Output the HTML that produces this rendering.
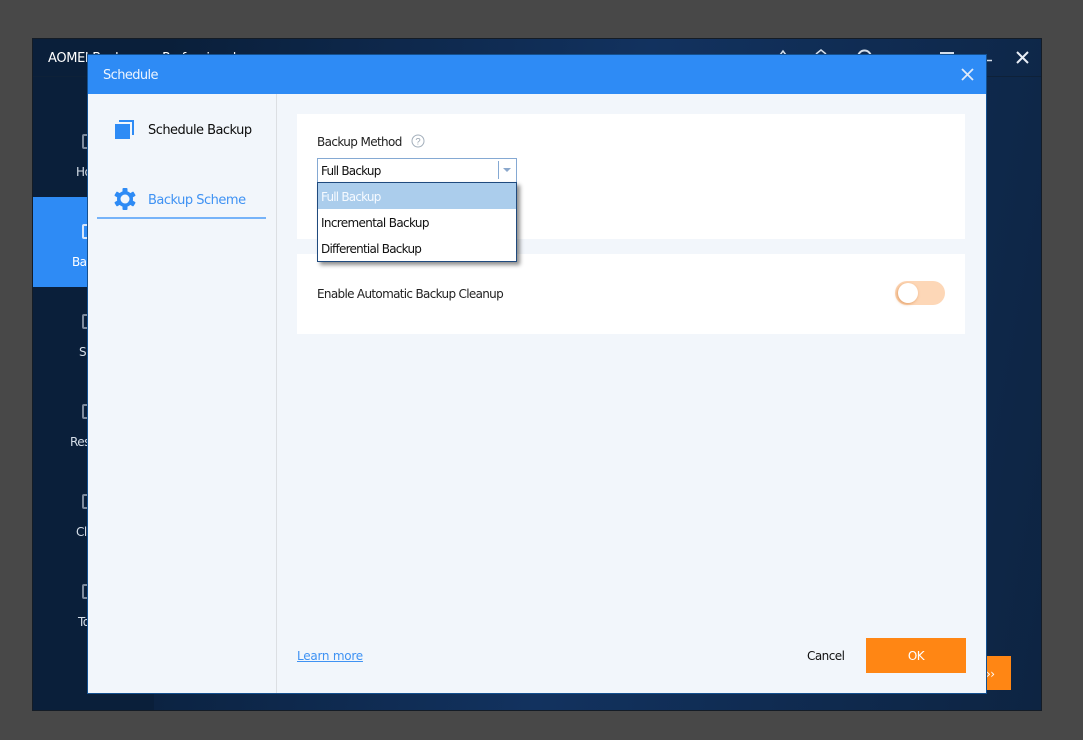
<!DOCTYPE html>
<html><head><meta charset="utf-8"><style>
html,body{margin:0;padding:0}
body{width:1083px;height:740px;background:#484848;position:relative;overflow:hidden;font-family:"DejaVu Sans","Liberation Sans",sans-serif;font-size:12px}
.a{position:absolute}
.t{position:absolute;white-space:nowrap;line-height:16px;letter-spacing:-.55px}
.ni{position:absolute;left:82px;width:12px;height:15px;border:2px solid #7d8b9e;border-radius:2px;box-sizing:border-box}
</style></head><body>
<div class="a" style="left:32px;top:38px;width:1010px;height:673px;box-sizing:border-box;border:1px solid #141c26;background:linear-gradient(100deg,#0a1f3a 0%,#0a1f3a 12%,#12325f 55%,#0d2442 100%);overflow:hidden"></div>
<div class="a" style="left:33px;top:39px;width:121px;height:671px;background:#0a1f3a"></div>
<div class="a" style="left:33px;top:76px;width:1008px;height:1px;background:#0e2138"></div>
<div class="t" style="left:48px;top:51px;color:#fff;font-size:13px;letter-spacing:-.35px">AOMEI Backupper Professional</div>
<svg class="a" style="left:770px;top:44px" width="270" height="24" fill="none" stroke="#d5deea" stroke-width="2">
<path d="M10 11l3-4 3 4" stroke-width="1.5"/><path d="M46 10l5-4 5 4" stroke-width="1.5"/>
<circle cx="94.5" cy="13" r="6.5" stroke-width="2"/><path d="M107 10.500h2M125 10.500h2" stroke-width="1"/>
<path d="M170 9h14" stroke-width="2"/><path d="M205 16.500h17" stroke-width="1.500"/>
<path d="M247 8l11 11M258 8l-11 11" stroke="#e8eef6" stroke-width="2"/></svg>
<div class="a" style="left:33px;top:197px;width:55px;height:90px;background:#2e8bf5"></div>
<div class="ni" style="top:134px"></div><div class="t" style="left:76px;top:164px;color:#d5dee9">Ho</div>
<div class="ni" style="top:224px;border-color:#d6e6fb"></div><div class="t" style="left:72px;top:254px;color:#fff">Ba</div>
<div class="ni" style="top:314px"></div><div class="t" style="left:79px;top:344px;color:#d5dee9">S</div>
<div class="ni" style="top:404px"></div><div class="t" style="left:70px;top:434px;color:#d5dee9">Res</div>
<div class="ni" style="top:494px"></div><div class="t" style="left:76px;top:524px;color:#d5dee9">Cl</div>
<div class="ni" style="top:584px"></div><div class="t" style="left:78px;top:614px;color:#d5dee9">To</div>
<div class="a" style="left:980px;top:656px;width:31px;height:34px;background:#ff8614"></div>
<div class="t" style="left:986px;top:666px;color:#fff">››</div>

<div class="a" style="left:87px;top:54px;width:900px;height:640px;box-sizing:border-box;border:1px solid #14508f;background:#f2f6fb"></div>
<div class="a" style="left:88px;top:55px;width:898px;height:39px;background:#2e8bf5"></div>
<div class="t" style="left:103px;top:68px;color:#eef5fe;font-size:13px;letter-spacing:-.6px">Schedule</div>
<svg class="a" style="left:960px;top:67px" width="15" height="15" fill="none" stroke="#dfeafa" stroke-width="1.8"><path d="M2 2l11 11M13 2L2 13"/></svg>
<div class="a" style="left:276px;top:94px;width:1px;height:599px;background:#dcdfe3"></div>

<svg class="a" style="left:115px;top:120px" width="19" height="19"><rect x="0" y="4" width="15" height="15" fill="#2e8bf5"/><path d="M4 1H18V15" fill="none" stroke="#2e8bf5" stroke-width="2"/></svg>
<div class="t" style="left:148px;top:123px;color:#0d0d0d;font-size:13px;letter-spacing:-.53px">Schedule Backup</div>
<svg class="a" style="left:114px;top:188px" width="22" height="22" viewBox="0 0 22 22"><g fill="#2e8bf5"><circle cx="11" cy="11" r="8"/><rect x="8.500" y="0" width="5" height="22" rx="1"/><rect x="8.500" y="0" width="5" height="22" rx="1" transform="rotate(60 11 11)"/><rect x="8.500" y="0" width="5" height="22" rx="1" transform="rotate(120 11 11)"/></g><circle cx="11" cy="11" r="4.500" fill="#f2f6fb"/></svg>
<div class="t" style="left:148px;top:193px;color:#3f92f3;font-size:13px;letter-spacing:-.5px">Backup Scheme</div>
<div class="a" style="left:97px;top:217px;width:169px;height:2px;background:#76b3f9"></div>

<div class="a" style="left:297px;top:114px;width:668px;height:125px;background:#fff"></div>
<div class="a" style="left:297px;top:254px;width:668px;height:80px;background:#fff"></div>
<div class="t" style="left:317px;top:134px;color:#222;letter-spacing:-.62px">Backup Method</div>
<svg class="a" style="left:411px;top:134px" width="14" height="14" fill="none"><circle cx="7" cy="7" r="6" stroke="#a3afbb" stroke-width="1"/><text x="7" y="10.500" text-anchor="middle" font-size="9.500" font-family="Liberation Sans" fill="#98a4b0">?</text></svg>

<div class="a" style="left:317px;top:158px;width:200px;height:25px;box-sizing:border-box;border:1px solid #85a9d3;background:#fff"></div>
<div class="t" style="left:321px;top:163px;color:#111;letter-spacing:-.8px">Full Backup</div>
<div class="a" style="left:498px;top:161px;width:1px;height:18px;background:#85a9d3"></div>
<div class="a" style="left:503px;top:168px;width:0;height:0;border-left:4.500px solid transparent;border-right:4.500px solid transparent;border-top:4px solid #8ba8cc"></div>

<div class="a" style="left:317px;top:182px;width:200px;height:80px;box-sizing:border-box;border:1px solid #1f4a7e;background:#fff;box-shadow:3px 3px 4px rgba(0,0,0,.45)"></div>
<div class="a" style="left:318px;top:183px;width:198px;height:26px;background:#abcdec"></div>
<div class="t" style="left:321px;top:189px;color:#f6faff;letter-spacing:-.8px">Full Backup</div>
<div class="t" style="left:321px;top:215px;color:#111;letter-spacing:-.66px">Incremental Backup</div>
<div class="t" style="left:321px;top:241px;color:#111;letter-spacing:-.76px">Differential Backup</div>

<div class="t" style="left:317px;top:286px;color:#222;letter-spacing:-.68px">Enable Automatic Backup Cleanup</div>
<div class="a" style="left:895px;top:281px;width:50px;height:24px;border-radius:12px;background:#fdd7b7"></div>
<div class="a" style="left:898px;top:283px;width:20px;height:20px;border-radius:50%;background:#fff;box-shadow:-1px 1px 3px rgba(214,130,60,.7)"></div>

<div class="t" style="left:297px;top:648px;color:#3f92f3;text-decoration:underline;letter-spacing:-.25px">Learn more</div>
<div class="t" style="left:807px;top:648px;color:#111">Cancel</div>
<div class="a" style="left:866px;top:638px;width:100px;height:35px;background:#ff8614"></div>
<div class="t" style="left:866px;width:100px;text-align:center;top:648px;color:#fff">OK</div>
</body></html>
